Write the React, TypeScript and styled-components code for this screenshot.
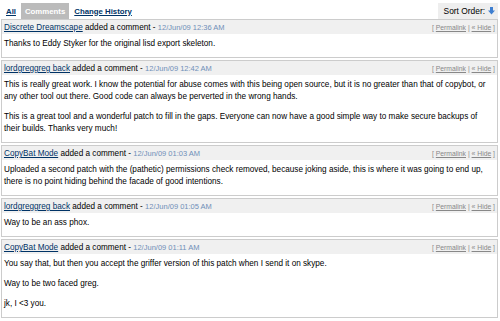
import React from 'react';
import styled, { createGlobalStyle } from 'styled-components';

const GlobalStyle = createGlobalStyle`
  html, body {
    margin: 0;
    padding: 0;
    background: #ffffff;
  }
  body {
    font-family: "Liberation Sans", Arial, sans-serif;
    color: #000;
  }
`;

const Page = styled.div`
  width: 497px;
  padding: 3px 2px 0 1px;
`;

const TabBar = styled.div`
  display: flex;
  align-items: stretch;
  justify-content: space-between;
  height: 16px;
`;

const Tabs = styled.div`
  display: flex;
  align-items: center;
  gap: 4px;
  padding-left: 4px;
`;

const TabLink = styled.a<{ $active?: boolean }>`
  font-size: 7.8px;
  font-weight: bold;
  color: ${({ $active }) => ($active ? '#ffffff' : '#003366')};
  background: ${({ $active }) => ($active ? '#bbbbbb' : 'transparent')};
  text-decoration: ${({ $active }) => ($active ? 'none' : 'underline')};
  padding: ${({ $active }) => ($active ? '0 4px' : '0 1px')};
  height: 100%;
  display: flex;
  align-items: center;
`;

const SortBox = styled.div`
  display: flex;
  align-items: center;
  gap: 3px;
  background: #eeeeee;
  font-size: 8.4px;
  padding: 0 3px 0 6px;
`;

const Block = styled.div`
  border: 1px solid #cccccc;
  margin-bottom: 2px;
`;

const Header = styled.div`
  display: flex;
  justify-content: space-between;
  align-items: center;
  background: #f0f0f0;
  padding: 3px 2px 2px;
  font-size: 8.2px;
`;

const Author = styled.a`
  color: #003366;
  text-decoration: underline;
`;

const DateText = styled.span`
  font-size: 7.5px;
  color: #6f8fb8;
`;

const Actions = styled.span`
  font-size: 6.8px;
  color: #888888;

  a {
    color: #888888;
    text-decoration: underline;
  }
`;

const Body = styled.div`
  padding: 4px 2px 7px;
  font-size: 8.2px;
  line-height: 12px;

  p {
    margin: 0 0 8px;
  }
  p:last-child {
    margin-bottom: 0;
  }
`;

const SortIcon = () => (
  <svg width="7" height="8" viewBox="0 0 7 8">
    <rect x="2" y="0" width="3" height="4" fill="#3f7fd0" />
    <polygon points="0,3.5 7,3.5 3.5,7.5" fill="#3f7fd0" />
  </svg>
);

type Comment = {
  author: string;
  date: string;
  paras: string[];
};

const comments: Comment[] = [
  {
    author: 'Discrete Dreamscape',
    date: '12/Jun/09 12:36 AM',
    paras: ['Thanks to Eddy Styker for the original lisd export skeleton.'],
  },
  {
    author: 'lordgreggreg back',
    date: '12/Jun/09 12:42 AM',
    paras: [
      'This is really great work. I know the potential for abuse comes with this being open source, but it is no greater than that of copybot, or any other tool out there. Good code can always be perverted in the wrong hands.',
      'This is a great tool and a wonderful patch to fill in the gaps. Everyone can now have a good simple way to make secure backups of their builds. Thanks very much!',
    ],
  },
  {
    author: 'CopyBat Mode',
    date: '12/Jun/09 01:03 AM',
    paras: [
      'Uploaded a second patch with the (pathetic) permissions check removed, because joking aside, this is where it was going to end up, there is no point hiding behind the facade of good intentions.',
    ],
  },
  {
    author: 'lordgreggreg back',
    date: '12/Jun/09 01:05 AM',
    paras: ['Way to be an ass phox.'],
  },
  {
    author: 'CopyBat Mode',
    date: '12/Jun/09 01:11 AM',
    paras: [
      'You say that, but then you accept the griffer version of this patch when I send it on skype.',
      'Way to be two faced greg.',
      'jk, I <3 you.',
    ],
  },
];

const App: React.FC = () => {
  return (
    <Page>
      <GlobalStyle />
      <TabBar>
        <Tabs>
          <TabLink href="#">All</TabLink>
          <TabLink $active>Comments</TabLink>
          <TabLink href="#">Change History</TabLink>
        </Tabs>
        <SortBox>
          Sort Order: <SortIcon />
        </SortBox>
      </TabBar>
      {comments.map((c, i) => (
        <Block key={i}>
          <Header>
            <span>
              <Author href="#">{c.author}</Author> added a comment -{' '}
              <DateText>{c.date}</DateText>
            </span>
            <Actions>
              [ <a href="#">Permalink</a> | <a href="#">« Hide</a> ]
            </Actions>
          </Header>
          <Body>
            {c.paras.map((p, j) => (
              <p key={j}>{p}</p>
            ))}
          </Body>
        </Block>
      ))}
    </Page>
  );
};

export default App;
